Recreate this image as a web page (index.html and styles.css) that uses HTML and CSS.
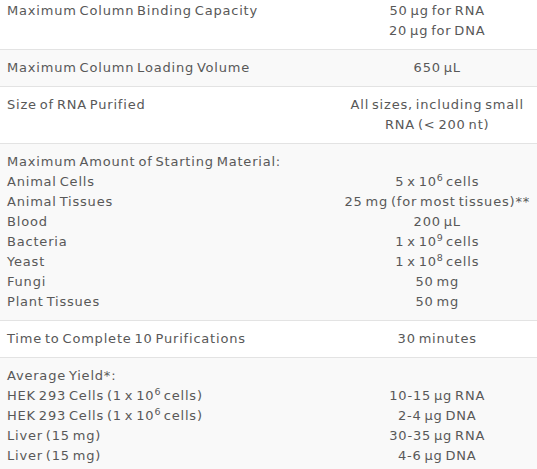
FILE: index.html
```html
<!DOCTYPE html>
<html>
<head>
<meta charset="utf-8">
<link rel="stylesheet" href="styles.css">
</head>
<body>
<table class="spec">
  <tr class="row">
    <td class="label">Maximum Column Binding Capacity</td>
    <td class="value">50 μg for RNA<br>20 μg for DNA</td>
  </tr>
  <tr class="row alt">
    <td class="label">Maximum Column Loading Volume</td>
    <td class="value">650 μL</td>
  </tr>
  <tr class="row">
    <td class="label">Size of RNA Purified</td>
    <td class="value">All sizes, including small<br>RNA (&lt; 200 nt)</td>
  </tr>
  <tr class="row alt">
    <td class="label">Maximum Amount of Starting Material:<br>Animal Cells<br>Animal Tissues<br>Blood<br>Bacteria<br>Yeast<br>Fungi<br>Plant Tissues</td>
    <td class="value"><br>5 x 10<sup>6</sup> cells<br>25 mg (for most tissues)**<br>200 μL<br>1 x 10<sup>9</sup> cells<br>1 x 10<sup>8</sup> cells<br>50 mg<br>50 mg</td>
  </tr>
  <tr class="row">
    <td class="label">Time to Complete 10 Purifications</td>
    <td class="value">30 minutes</td>
  </tr>
  <tr class="row alt">
    <td class="label">Average Yield*:<br>HEK 293 Cells (1 x 10<sup>6</sup> cells)<br>HEK 293 Cells (1 x 10<sup>6</sup> cells)<br>Liver (15 mg)<br>Liver (15 mg)</td>
    <td class="value"><br>10-15 μg RNA<br>2-4 μg DNA<br>30-35 μg RNA<br>4-6 μg DNA</td>
  </tr>
</table>
</body>
</html>
```
FILE: styles.css
```css
html, body {
  margin: 0;
  padding: 0;
  background: #ffffff;
}
.spec {
  border-collapse: collapse;
  width: 537px;
  margin-top: -7px;
  font-family: "DejaVu Sans", sans-serif;
  font-size: 13px;
  line-height: 20px;
  letter-spacing: 0.8px;
  word-spacing: -2px;
  color: #585858;
}
.row {
  border-top: 1px solid #e3e3e3;
}
.row:first-child {
  border-top: none;
}
.alt {
  background: #f9f9f9;
}
.label {
  width: 337px;
  padding: 8px 0 8px 7px;
  vertical-align: top;
  text-align: left;
  white-space: nowrap;
}
.value {
  width: 179px;
  padding: 8px 7px;
  vertical-align: top;
  text-align: center;
  white-space: nowrap;
}
sup {
  font-size: 9.5px;
  line-height: 0;
  vertical-align: 5px;
  letter-spacing: 0.3px;
}
```
